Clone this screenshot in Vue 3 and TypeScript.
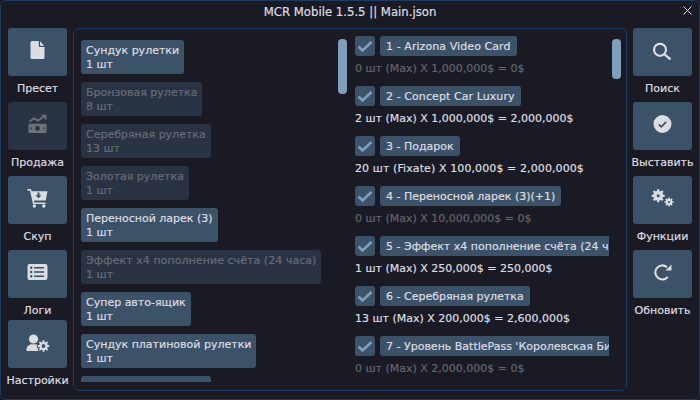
<script setup lang="ts">
interface SideButton { label: string; icon: string; disabled?: boolean }
interface Stock { name: string; qty: string; disabled?: boolean; wide?: boolean }
interface Lot { title: string; line: string; muted?: boolean; wideTitle?: boolean; wideLine?: boolean }
interface IconPart { d: string; stroke?: number; color?: string; halo?: boolean }

const leftButtons: SideButton[] = [
  { label: 'Пресет', icon: 'file' },
  { label: 'Продажа', icon: 'money', disabled: true },
  { label: 'Скуп', icon: 'cart' },
  { label: 'Логи', icon: 'list' },
  { label: 'Настройки', icon: 'usercog' },
]
const rightButtons: SideButton[] = [
  { label: 'Поиск', icon: 'search' },
  { label: 'Выставить', icon: 'check' },
  { label: 'Функции', icon: 'cogs' },
  { label: 'Обновить', icon: 'redo' },
]
const stock: Stock[] = [
  { name: 'Сундук рулетки', qty: '1 шт' },
  { name: 'Бронзовая рулетка', qty: '8 шт', disabled: true },
  { name: 'Серебряная рулетка', qty: '13 шт', disabled: true },
  { name: 'Золотая рулетка', qty: '1 шт', disabled: true },
  { name: 'Переносной ларек (3)', qty: '1 шт' },
  { name: 'Эффект x4 пополнение счёта (24 часа)', qty: '1 шт', disabled: true, wide: true },
  { name: 'Супер авто-ящик', qty: '1 шт' },
  { name: 'Сундук платиновой рулетки', qty: '1 шт' },
  { name: 'Майский ларец удач', qty: '1 шт' },
]
const lots: Lot[] = [
  { title: '1 - Arizona Video Card', line: '0 шт (Max) X 1,000,000$ = 0$', muted: true, wideTitle: true },
  { title: '2 - Concept Car Luxury', line: '2 шт (Max) X 1,000,000$ = 2,000,000$', wideTitle: true },
  { title: '3 - Подарок', line: '20 шт (Fixate) X 100,000$ = 2,000,000$', wideLine: true },
  { title: '4 - Переносной ларек (3)(+1)', line: '0 шт (Max) X 10,000,000$ = 0$', muted: true },
  { title: '5 - Эффект x4 пополнение счёта (24 часа)', line: '1 шт (Max) X 250,000$ = 250,000$' },
  { title: '6 - Серебряная рулетка', line: '13 шт (Max) X 200,000$ = 2,600,000$' },
  { title: "7 - Уровень BattlePass 'Королевская Битва'", line: '0 шт (Max) X 2,000,000$ = 0$', muted: true },
]

const BTN = '#3c5269'

function circle(cx: number, cy: number, r: number): string {
  return `M${cx - r} ${cy}a${r} ${r} 0 1 0 ${2 * r} 0a${r} ${r} 0 1 0 ${-2 * r} 0z`
}

function gear(cx: number, cy: number, inner: number, outer: number, hole: number, teeth = 8): string {
  const step = (Math.PI * 2) / teeth
  let d = ''
  for (let i = 0; i < teeth; i++) {
    const a = i * step
    const pts: [number, number][] = [
      [inner, a - step * 0.32],
      [outer, a - step * 0.2],
      [outer, a + step * 0.2],
      [inner, a + step * 0.32],
    ]
    for (const [r, t] of pts) {
      d += `${d ? 'L' : 'M'}${(cx + r * Math.cos(t)).toFixed(2)} ${(cy + r * Math.sin(t)).toFixed(2)}`
    }
  }
  return `${d}z${circle(cx, cy, hole)}`
}

const icons: Record<string, IconPart[]> = {
  file: [
    { d: 'M4.500 2.500a1.500 1.500 0 0 1 1.500-1.500H12.800V6a1 1 0 0 0 1 1H18.500V17.500a1.500 1.500 0 0 1-1.500 1.500H6a1.500 1.500 0 0 1-1.500-1.500z' },
    { d: 'M14 1.300L18.300 5.800H14z' },
  ],
  money: [
    { d: 'M3.500 7.500L8 4.300l4 2.400L17.500 2.500', stroke: 1.900 },
    { d: 'M14.800 .8H20.300V6.300z' },
    { d: `M3.500 9.800H19.500a1 1 0 0 1 1 1V18a1 1 0 0 1-1 1H3.500a1 1 0 0 1-1-1V10.800a1 1 0 0 1 1-1z${circle(11.500, 14.400, 2.300)}${circle(5, 14.400, .9)}${circle(18, 14.400, .9)}` },
  ],
  cart: [
    { d: 'M1.500 1H5l.6 2.300H21.500L19.700 12.500H8l.4 2H19.500V16H7L4 2.700H1.500zM11.500 4.500v2.800h-2l3 3 3-3h-2V4.500z' },
    { d: circle(8.300, 18, 1.700) },
    { d: circle(17.800, 18, 1.700) },
  ],
  list: [
    { d: `M3.500 2H19.500a2 2 0 0 1 2 2V16a2 2 0 0 1-2 2H3.500a2 2 0 0 1-2-2V4a2 2 0 0 1 2-2z${circle(5.200, 5.800, 1.200)}${circle(5.200, 10, 1.200)}${circle(5.200, 14.200, 1.200)}M8 5h10v1.500H8zM8 9.200h10v1.500H8zM8 13.400h10v1.500H8z` },
  ],
  usercog: [
    { d: circle(7.500, 7, 4.600) },
    { d: 'M.5 19v-1.500c0-3 2.500-5.300 5.300-5.300h3.400c2.800 0 4.800 2 5 5V19z' },
    { d: gear(17.500, 14, 4.200, 5.800, 1.900), halo: true },
  ],
  search: [
    { d: circle(9, 9.800, 6), stroke: 2.200 },
    { d: 'M13.600 14.300L19.500 19.300', stroke: 2.400 },
  ],
  check: [
    { d: circle(11.500, 10, 9) },
    { d: 'M7.800 10.300l2.500 2.500 4.800-5', stroke: 1.700, color: BTN },
  ],
  cogs: [
    { d: gear(7.200, 7.700, 4.900, 6.600, 1.500) },
    { d: gear(18, 14, 3.300, 4.600, 1.100) },
  ],
  redo: [
    { d: 'M16 5.200A7 7 0 1 0 16.800 14.800', stroke: 2.100 },
    { d: 'M20.500 2.500V8.500H14.500z' },
  ],
}
</script>

<template>
  <div class="window">
    <header class="titlebar">
      <span>MCR Mobile 1.5.5 || Main.json</span>
      <svg class="close" viewBox="0 0 9 9"><path d="M.5 .5l8 8M8.500 .5l-8 8" /></svg>
    </header>
    <div class="body">
      <nav class="side left">
        <div v-for="b in leftButtons" :key="b.label" class="side-item">
          <div class="side-btn" :class="{ off: b.disabled }">
            <svg viewBox="0 0 24 24" class="icon">
              <path
                v-for="(p, i) in icons[b.icon]"
                :key="i"
                :d="p.d"
                fill-rule="evenodd"
                :class="{ halo: p.halo }"
                :fill="p.stroke ? 'none' : 'currentColor'"
                :stroke="p.stroke ? (p.color ?? 'currentColor') : undefined"
                :stroke-width="p.stroke"
              />
            </svg>
          </div>
          <span class="side-label">{{ b.label }}</span>
        </div>
      </nav>

      <main class="panel">
        <section class="col stock">
          <div
            v-for="s in stock"
            :key="s.name"
            class="stock-item"
            :class="{ off: s.disabled, wide: s.wide }"
          >
            <div>{{ s.name }}</div>
            <div>{{ s.qty }}</div>
          </div>
        </section>
        <section class="col lots">
          <div v-for="l in lots" :key="l.title" class="lot">
            <div class="lot-head">
              <span class="box">
                <svg viewBox="0 0 20 20"><path d="M3.500 10.500l4 4 9-8.500" /></svg>
              </span>
              <span class="lot-title" :class="{ wide: l.wideTitle }">{{ l.title }}</span>
            </div>
            <div class="lot-line" :class="{ muted: l.muted, wide: l.wideLine }">{{ l.line }}</div>
          </div>
        </section>
        <i class="thumb thumb-a"></i>
        <i class="thumb thumb-b"></i>
      </main>

      <nav class="side right">
        <div v-for="b in rightButtons" :key="b.label" class="side-item">
          <div class="side-btn">
            <svg viewBox="0 0 24 24" class="icon">
              <path
                v-for="(p, i) in icons[b.icon]"
                :key="i"
                :d="p.d"
                fill-rule="evenodd"
                :fill="p.stroke ? 'none' : 'currentColor'"
                :stroke="p.stroke ? (p.color ?? 'currentColor') : undefined"
                :stroke-width="p.stroke"
              />
            </svg>
          </div>
          <span class="side-label">{{ b.label }}</span>
        </div>
      </nav>
    </div>
  </div>
</template>

<style>
html, body { margin: 0; background: #1a1a24; }
</style>

<style scoped>
.window {
  width: 700px; height: 400px; box-sizing: border-box;
  display: flex; flex-direction: column;
  background: #1a1a24; color: #dcdde2;
  border: 1px solid #1f3a5f; border-radius: 6px;
  font-family: "DejaVu Sans", sans-serif; font-size: 11px; line-height: 14px;
  -webkit-text-stroke: 0.2px;
  overflow: hidden;
}
.titlebar {
  height: 27px; flex: none; position: relative;
  display: flex; align-items: center; justify-content: center;
  padding-bottom: 6px; box-sizing: border-box; font-size: 11.7px;
}
.close {
  position: absolute; right: 7px; top: 5px; width: 9px; height: 9px;
  fill: none; stroke: #dcdde2; stroke-width: 1;
}
.body { flex: 1; display: flex; gap: 6px; padding: 0 7px 8px; min-height: 0; }
.side { width: 59px; flex: none; display: flex; flex-direction: column; }
.side-item { display: flex; flex-direction: column; align-items: center; flex: none; height: 74px; }
.left .side-item:nth-child(4) { height: 70px; }
.left .side-item:nth-child(5) { height: 64px; }
.side-btn {
  width: 59px; height: 48px; flex: none; border-radius: 3px;
  background: #3c5269; color: #dcdde2;
  display: flex; align-items: center; justify-content: center;
}
.side-btn.off { background: #2a3344; color: #6d7178; }
.icon { width: 24px; height: 24px; }
.halo { stroke: #3c5269; stroke-width: 2; paint-order: stroke; }
.side-label { margin-top: 6px; white-space: nowrap; }
.panel {
  flex: 1; min-width: 0; position: relative;
  border: 1px solid #1f3a5f; border-radius: 6px;
  display: flex; overflow: hidden;
}
.col { display: flex; flex-direction: column; overflow: hidden; }
.stock { width: 273px; flex: none; padding: 11px 0 0 7px; height: 342px; box-sizing: content-box; gap: 8px; }
.stock-item {
  width: fit-content; flex: none; height: 34px; box-sizing: border-box;
  padding: 4px 5px 2px; border-radius: 3px; background: #3c5269; white-space: nowrap;
}
.stock-item.off { background: #2a3344; color: #686c75; }
.stock-item.wide { letter-spacing: .06px; }
.lots { width: 254px; flex: none; margin-left: 1px; padding-top: 7px; gap: 10px; }
.lot { display: flex; flex-direction: column; flex: none; gap: 5px; height: 40px; }
.lot-head { display: flex; gap: 5px; height: 20px; }
.box {
  width: 20px; height: 20px; flex: none; border-radius: 3px; background: #3c5269;
  display: flex;
}
.box svg { width: 20px; height: 20px; fill: none; stroke: #7f9fbb; stroke-width: 2.600; }
.lot-title {
  padding: 1px 6px 0; line-height: 19px; border-radius: 3px; background: #3c5269;
  white-space: nowrap;
}
.lot-title.wide { letter-spacing: .08px; }
.lot-line { white-space: nowrap; margin-top: 1px; }
.lot-line.muted { color: #62656e; }
.lot-line.wide { letter-spacing: .1px; }
.thumb { position: absolute; top: 10px; width: 9px; border-radius: 4px; background: #7f9fbb; }
.thumb-a { left: 264px; height: 55px; }
.thumb-b { left: 538px; height: 40px; }
</style>
